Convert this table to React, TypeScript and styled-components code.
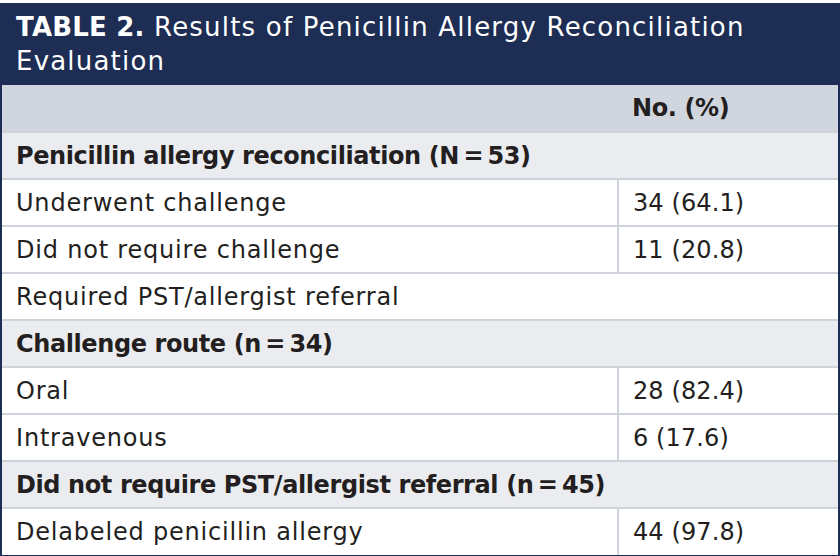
import React from "react";
import styled, { createGlobalStyle } from "styled-components";

const GlobalStyle = createGlobalStyle`
  html, body { margin: 0; padding: 0; background: #ffffff; }
  body { font-family: "DejaVu Sans", "Liberation Sans", sans-serif; }
`;

const NAVY = "#1d2d54";
const LINE = "#cfd3dc";

const Frame = styled.div`
  margin-top: 3px;
  width: 840px;
  box-sizing: border-box;
  border-left: 2px solid ${NAVY};
  border-right: 2px solid ${NAVY};
  border-bottom: 2px solid ${NAVY};
  background: #ffffff;
`;

const Title = styled.div`
  background: ${NAVY};
  color: #ffffff;
  font-size: 26px;
  line-height: 34px;
  padding: 7px 14px 7px 14px;
  font-weight: 400;
  letter-spacing: 1.2px;
`;

const TitleLabel = styled.span`
  font-weight: 700;
  letter-spacing: 0.2px;
`;

const Table = styled.table`
  width: 100%;
  border-collapse: collapse;
  table-layout: fixed;
  color: #231f20;
  font-size: 24px;
`;

const Row = styled.tr<{ $variant?: "head" | "section" | "data" }>`
  height: 47px;
  background: ${(p) =>
    p.$variant === "head" ? "#d1d5de" : p.$variant === "section" ? "#ebecf0" : "#ffffff"};
  border-top: ${(p) => (p.$variant === "head" ? "none" : `2px solid ${LINE}`)};
  font-weight: ${(p) => (p.$variant === "data" ? 400 : 700)};
  letter-spacing: ${(p) => (p.$variant === "data" ? "0.8px" : "-0.4px")};
`;

const Cell = styled.td<{ $value?: boolean }>`
  padding: 0 14px;
  vertical-align: middle;
  white-space: nowrap;
  box-sizing: border-box;
  ${(p) => (p.$value ? `border-left: 2px solid ${LINE}; letter-spacing: 0.1px;` : "")}
`;

type Item =
  | { kind: "section"; label: string }
  | { kind: "data"; label: string; value?: string };

const rows: Item[] = [
  { kind: "section", label: "Penicillin allergy reconciliation (N\u2009=\u200953)" },
  { kind: "data", label: "Underwent challenge", value: "34 (64.1)" },
  { kind: "data", label: "Did not require challenge", value: "11 (20.8)" },
  { kind: "data", label: "Required PST/allergist referral" },
  { kind: "section", label: "Challenge route (n\u2009=\u200934)" },
  { kind: "data", label: "Oral", value: "28 (82.4)" },
  { kind: "data", label: "Intravenous", value: "6 (17.6)" },
  { kind: "section", label: "Did not require PST/allergist referral (n\u2009=\u200945)" },
  { kind: "data", label: "Delabeled penicillin allergy", value: "44 (97.8)" },
];

export default function App() {
  return (
    <>
      <GlobalStyle />
      <Frame>
        <Title>
          <TitleLabel>TABLE 2.</TitleLabel> Results of Penicillin Allergy Reconciliation
          <br />
          Evaluation
        </Title>
        <Table>
          <colgroup>
            <col style={{ width: 616 }} />
            <col />
          </colgroup>
          <tbody>
            <Row $variant="head">
              <Cell />
              <Cell>No. (%)</Cell>
            </Row>
            {rows.map((r, i) =>
              r.kind === "section" ? (
                <Row key={i} $variant="section">
                  <Cell colSpan={2}>{r.label}</Cell>
                </Row>
              ) : r.value ? (
                <Row key={i} $variant="data">
                  <Cell>{r.label}</Cell>
                  <Cell $value>{r.value}</Cell>
                </Row>
              ) : (
                <Row key={i} $variant="data">
                  <Cell colSpan={2}>{r.label}</Cell>
                </Row>
              )
            )}
          </tbody>
        </Table>
      </Frame>
    </>
  );
}
